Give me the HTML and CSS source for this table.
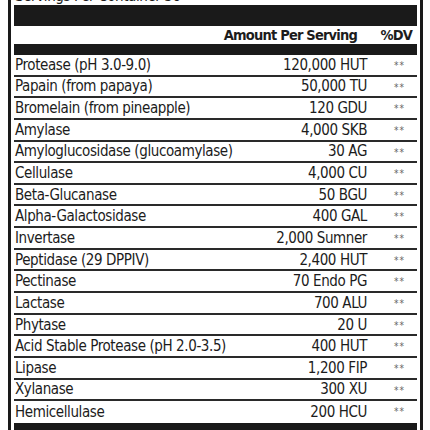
FILE: index.html
```html
<!DOCTYPE html>
<html lang="en">
<head>
  <meta charset="UTF-8">
  <meta name="viewport" content="width=device-width, initial-scale=1.0">
  <title>Supplement Facts</title>
  <link rel="stylesheet" href="styles.css">
</head>
<body>
  <div class="label">
    <div class="servings">Servings Per Container 30</div>
    <div class="bar bar-thick"></div>

    <div class="head">
      <span class="name"></span>
      <span class="amount">Amount Per Serving</span>
      <span class="dv">%DV</span>
    </div>
    <div class="bar bar-mid"></div>

    <!-- Enzimas -->
    <div class="rows">
      <div class="row"><span class="name">Protease (pH 3.0-9.0)</span><span class="amount">120,000 HUT</span><span class="dv">**</span></div>
      <div class="row"><span class="name">Papain (from papaya)</span><span class="amount">50,000 TU</span><span class="dv">**</span></div>
      <div class="row"><span class="name">Bromelain (from pineapple)</span><span class="amount">120 GDU</span><span class="dv">**</span></div>
      <div class="row"><span class="name">Amylase</span><span class="amount">4,000 SKB</span><span class="dv">**</span></div>
      <div class="row"><span class="name">Amyloglucosidase (glucoamylase)</span><span class="amount">30 AG</span><span class="dv">**</span></div>
      <div class="row"><span class="name">Cellulase</span><span class="amount">4,000 CU</span><span class="dv">**</span></div>
      <div class="row"><span class="name">Beta-Glucanase</span><span class="amount">50 BGU</span><span class="dv">**</span></div>
      <div class="row"><span class="name">Alpha-Galactosidase</span><span class="amount">400 GAL</span><span class="dv">**</span></div>
      <div class="row"><span class="name">Invertase</span><span class="amount">2,000 Sumner</span><span class="dv">**</span></div>
      <div class="row"><span class="name">Peptidase (29 DPPIV)</span><span class="amount">2,400 HUT</span><span class="dv">**</span></div>
      <div class="row"><span class="name">Pectinase</span><span class="amount">70 Endo PG</span><span class="dv">**</span></div>
      <div class="row"><span class="name">Lactase</span><span class="amount">700 ALU</span><span class="dv">**</span></div>
      <div class="row"><span class="name">Phytase</span><span class="amount">20 U</span><span class="dv">**</span></div>
      <div class="row"><span class="name">Acid Stable Protease (pH 2.0-3.5)</span><span class="amount">400 HUT</span><span class="dv">**</span></div>
      <div class="row"><span class="name">Lipase</span><span class="amount">1,200 FIP</span><span class="dv">**</span></div>
      <div class="row"><span class="name">Xylanase</span><span class="amount">300 XU</span><span class="dv">**</span></div>
      <div class="row"><span class="name">Hemicellulase</span><span class="amount">200 HCU</span><span class="dv">**</span></div>
    </div>
    <div class="bar bar-thick"></div>
  </div>
</body>
</html>
```

FILE: styles.css
```css
/* Rótulo de fatos do suplemento */
body {
  margin: 0;
  background-color: #ffffff;
  font-family: "DejaVu Sans Condensed", "Liberation Sans", sans-serif;
  font-stretch: condensed;
  color: #1c1c1c;
  overflow: hidden;
}

.label {
  width: 403px;
  margin: -13px 0 0 8px;
  padding: 0 3px;
  border-left: 3px solid #1a1a1a;
  border-right: 3px solid #1a1a1a;
}

.servings {
  height: 18px;
  font-size: 15px;
  line-height: 18px;
  padding-left: 1px;
  letter-spacing: -0.4px;
}

.bar {
  background-color: #1a1a1a;
}

.bar-thick {
  height: 21px;
}

.bar-mid {
  height: 11px;
}

/* Cabeçalho da tabela */
.head {
  display: flex;
  align-items: center;
  height: 18px;
  font-size: 14.5px;
  font-weight: bold;
  letter-spacing: -0.8px;
}

.head .amount {
  padding-right: 5px;
}

.head .dv {
  text-align: right;
  padding-right: 5px;
}

/* Linhas */
.row {
  display: flex;
  align-items: center;
  height: 21.65px;
  box-sizing: border-box;
  border-bottom: 2px solid #2a2a2a;
  font-size: 15px;
  letter-spacing: -0.4px;
}

.row:last-child {
  border-bottom: none;
}

.name {
  flex: 1;
  padding-left: 1px;
  white-space: nowrap;
}

.amount {
  text-align: right;
  white-space: nowrap;
}

.dv {
  width: 50px;
  flex-shrink: 0;
}

.row .dv {
  text-align: right;
  padding-right: 12px;
  box-sizing: border-box;
  font-size: 10px;
  letter-spacing: 1px;
  color: #666666;
  align-self: flex-start;
  padding-top: 5px;
}
```
